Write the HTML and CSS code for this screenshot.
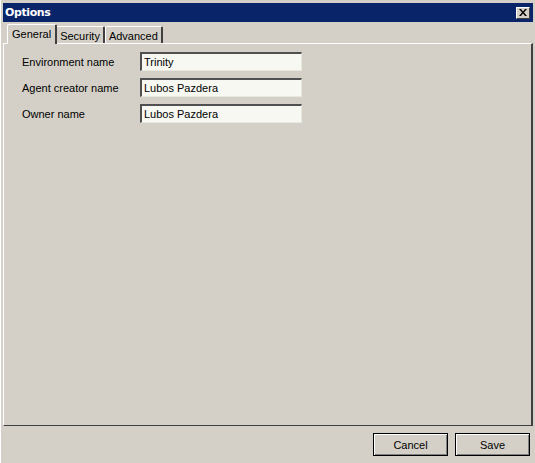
FILE: index.html
```html
<!DOCTYPE html>
<html>
<head>
<meta charset="utf-8">
<link rel="stylesheet" href="styles.css">
</head>
<body>
<div class="window">
  <div class="titlebar">
    <span class="title">Options</span>
    <span class="close"><svg width="8" height="7" viewBox="0 0 8 7"><path d="M0 0h2l2 2.5L6 0h2L5 3.5 8 7H6L4 4.5 2 7H0l3-3.5z" fill="#000"/></svg></span>
  </div>
  <div class="tabs">
    <div class="tab active">General</div>
    <div class="tab">Security</div>
    <div class="tab">Advanced</div>
  </div>
  <div class="panel">
    <div class="row"><label>Environment name</label><div class="input">Trinity</div></div>
    <div class="row"><label>Agent creator name</label><div class="input">Lubos Pazdera</div></div>
    <div class="row"><label>Owner name</label><div class="input">Lubos Pazdera</div></div>
  </div>
  <div class="footer">
    <button class="btn">Cancel</button>
    <button class="btn">Save</button>
  </div>
</div>
</body>
</html>
```
FILE: styles.css
```css
html, body {
  margin: 0;
  padding: 0;
  background: #d4d0c8;
  font-family: "Liberation Sans", Arial, sans-serif;
  font-size: 11px;
  color: #000;
}
.window {
  width: 535px;
  height: 463px;
  box-sizing: border-box;
  padding: 3px 2px 0 2px;
  border-left: 1px solid #fff;
  display: flex;
  flex-direction: column;
  background: #d4d0c8;
}
.titlebar {
  height: 19px;
  background: #0a246a;
  display: flex;
  align-items: center;
  justify-content: space-between;
  padding: 0 3px 0 2px;
}
.title {
  color: #fff;
  font-weight: bold;
  font-family: "DejaVu Sans", sans-serif;
  font-size: 11px;
  letter-spacing: -0.4px;
}
.close {
  width: 14px;
  height: 12px;
  background: #d4d0c8;
  box-sizing: border-box;
  border-top: 1px solid #fff;
  border-left: 1px solid #fff;
  border-right: 1px solid #404040;
  border-bottom: 1px solid #404040;
  display: flex;
  align-items: center;
  justify-content: center;
}
.tabs {
  height: 21px;
  display: flex;
  align-items: flex-end;
  padding-left: 4px;
}
.tab {
  height: 17px;
  box-sizing: border-box;
  padding: 2px 3px 0 3px;
  border-top: 1px solid #fff;
  border-left: 1px solid #fff;
  border-right: 2px solid #404040;
  border-radius: 2px 2px 0 0;
  line-height: 14px;
  font-size: 11px;
}
.tab.active {
  height: 20px;
  padding: 2px 4px 0 4px;
  margin-right: -1px;
  position: relative;
  top: 1px;
  background: #d4d0c8;
}
.panel {
  flex: 1;
  border-top: 1px solid #fff;
  border-left: 1px solid #fff;
  border-right: 2px solid #404040;
  border-bottom: 1px solid #404040;
  padding: 8px 0 0 18px;
  display: flex;
  flex-direction: column;
  gap: 7px;
}
.row {
  display: flex;
  align-items: center;
  height: 19px;
}
.row label {
  width: 118px;
}
.input {
  width: 162px;
  height: 19px;
  box-sizing: border-box;
  background: #f6f8f1;
  border-top: 2px solid #505050;
  border-left: 2px solid #505050;
  border-right: 1px solid #e8e8e0;
  border-bottom: 1px solid #e8e8e0;
  padding-left: 2px;
  line-height: 16px;
}
.footer {
  height: 37px;
  display: flex;
  justify-content: flex-end;
  align-items: flex-start;
  gap: 7px;
  padding: 7px 3px 0 0;
  box-sizing: border-box;
}
.btn {
  width: 75px;
  height: 23px;
  background: #d4d0c8;
  border: 1px solid #000;
  box-shadow: inset 1px 1px 0 #fff, inset -1px -1px 0 #808080;
  font-family: "Liberation Sans", Arial, sans-serif;
  font-size: 11px;
  color: #000;
  padding: 0;
}
```
